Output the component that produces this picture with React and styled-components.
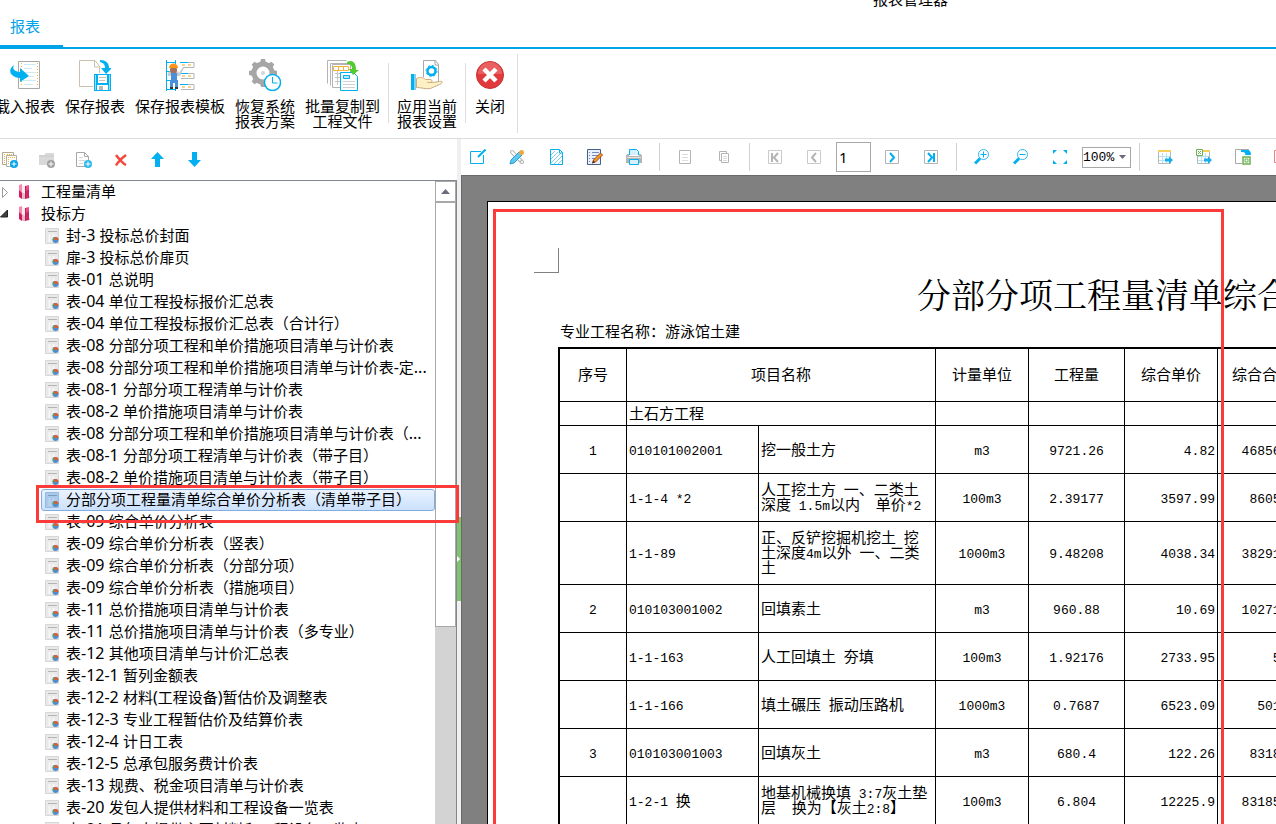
import React, { useState } from 'react';
import styled, { createGlobalStyle, css } from 'styled-components';

const colors = {
  blue: '#00b0f0',
  accent: '#00a2e8',
  line: '#dcdcdc',
  frame: '#828790',
  gray: '#a8a8a8',
  desk: '#808080',
  red: '#fb3a3a',
  green: '#7fc46c',
};

const sans = '"Noto Sans", "Noto Sans CJK SC", sans-serif';
const cjk = '"Noto Sans CJK SC", sans-serif';
const mono = '"Liberation Mono", "Noto Sans CJK SC", monospace';

const folders = [
  { name: '工程量清单', open: false, items: [] },
  {
    name: '投标方',
    open: true,
    items: [
      '封-3 投标总价封面',
      '扉-3 投标总价扉页',
      '表-01 总说明',
      '表-04 单位工程投标报价汇总表',
      '表-04 单位工程投标报价汇总表（合计行）',
      '表-08 分部分项工程和单价措施项目清单与计价表',
      '表-08 分部分项工程和单价措施项目清单与计价表-定...',
      '表-08-1 分部分项工程清单与计价表',
      '表-08-2 单价措施项目清单与计价表',
      '表-08 分部分项工程和单价措施项目清单与计价表（...',
      '表-08-1 分部分项工程清单与计价表（带子目）',
      '表-08-2 单价措施项目清单与计价表（带子目）',
      '分部分项工程量清单综合单价分析表（清单带子目）',
      '表-09 综合单价分析表',
      '表-09 综合单价分析表（竖表）',
      '表-09 综合单价分析表（分部分项）',
      '表-09 综合单价分析表（措施项目）',
      '表-11 总价措施项目清单与计价表',
      '表-11 总价措施项目清单与计价表（多专业）',
      '表-12 其他项目清单与计价汇总表',
      '表-12-1 暂列金额表',
      '表-12-2 材料(工程设备)暂估价及调整表',
      '表-12-3 专业工程暂估价及结算价表',
      '表-12-4 计日工表',
      '表-12-5 总承包服务费计价表',
      '表-13 规费、税金项目清单与计价表',
      '表-20 发包人提供材料和工程设备一览表',
      '表-21 承包人提供主要材料和工程设备一览表',
    ],
  },
];

const rows = [
  { no: '1', code: '010101002001', name: '挖一般土方', unit: 'm3', qty: '9721.26', price: '4.82', total: '46856.47' },
  { no: '', code: '1-1-4 *2', name: '人工挖土方 一、二类土\n深度 1.5m以内  单价*2', unit: '100m3', qty: '2.39177', price: '3597.99', total: '8605.57' },
  { no: '', code: '1-1-89', name: '正、反铲挖掘机挖土 挖\n土深度4m以外 一、二类\n土', unit: '1000m3', qty: '9.48208', price: '4038.34', total: '38291.86', height: 63 },
  { no: '2', code: '010103001002', name: '回填素土', unit: 'm3', qty: '960.88', price: '10.69', total: '10271.81' },
  { no: '', code: '1-1-163', name: '人工回填土 夯填', unit: '100m3', qty: '1.92176', price: '2733.95', total: '5254' },
  { no: '', code: '1-1-166', name: '填土碾压 振动压路机', unit: '1000m3', qty: '0.7687', price: '6523.09', total: '5014.3' },
  { no: '3', code: '010103001003', name: '回填灰土', unit: 'm3', qty: '680.4', price: '122.26', total: '83185.7' },
  { no: '', code: '1-2-1 换', name: '地基机械换填 3:7灰土垫\n层  换为【灰土2:8】', unit: '100m3', qty: '6.804', price: '12225.9', total: '83185.02' },
];

export default function App() {
  const [selected, setSelected] = useState('分部分项工程量清单综合单价分析表（清单带子目）');

  return (
    <Window>
      <GlobalStyle />
      <TitleBar>报表管理器</TitleBar>
      <Tabs>
        <Tab type="button">报表</Tab>
      </Tabs>
      <Ribbon />
      <Workspace>
        <Sidebar selected={selected} onSelect={setSelected} />
        <Splitter>
          <SplitterHandle type="button" aria-label="收起">
            <svg width="4" height="8" viewBox="0 0 4 8"><path d="M0 1l3 3-3 3z" fill="#fff" /></svg>
          </SplitterHandle>
        </Splitter>
        <Main>
          <ReportToolbar />
          <Preview />
        </Main>
      </Workspace>
    </Window>
  );
}

function Ribbon() {
  return (
    <RibbonBar>
      <RibbonButton type="button"><ImportIcon />载入报表</RibbonButton>
      <RibbonButton type="button"><SaveIcon />保存报表</RibbonButton>
      <RibbonButton type="button"><TemplateIcon />保存报表模板</RibbonButton>
      <RibbonButton type="button"><RestoreIcon />恢复系统<br />报表方案</RibbonButton>
      <RibbonButton type="button"><BatchIcon />批量复制到<br />工程文件</RibbonButton>
      <RibbonDivider />
      <RibbonButton type="button"><ApplyIcon />应用当前<br />报表设置</RibbonButton>
      <RibbonDivider />
      <RibbonButton type="button"><CloseIcon />关闭</RibbonButton>
      <RibbonDivider $tall />
    </RibbonBar>
  );
}

function Sidebar({ selected, onSelect }) {
  return (
    <Side>
      <SideTools>
        <IconButton type="button" aria-label="新建方案"><AddSchemeIcon /></IconButton>
        <IconButton type="button" aria-label="新建文件夹"><AddFolderIcon /></IconButton>
        <IconButton type="button" aria-label="新建报表"><AddPageIcon /></IconButton>
        <IconButton type="button" aria-label="删除"><DeleteIcon /></IconButton>
        <IconButton type="button" aria-label="上移"><ArrowIcon /></IconButton>
        <IconButton type="button" aria-label="下移"><ArrowIcon down /></IconButton>
      </SideTools>
      <TreePanel>
        <Tree>
          {folders.map((folder) => (
            <li key={folder.name}>
              <FolderRow type="button">
                <Toggle open={folder.open} />
                <FolderIcon />
                <RowText>{folder.name}</RowText>
              </FolderRow>
              {folder.open && (
                <Branch>
                  {folder.items.map((item) => (
                    <li key={item}>
                      <ReportRow
                        type="button"
                        $active={item === selected}
                        onClick={() => onSelect(item)}
                      >
                        <ReportIcon active={item === selected} />
                        <RowText><Mixed text={item} latin={TreeLatin} /></RowText>
                      </ReportRow>
                    </li>
                  ))}
                </Branch>
              )}
            </li>
          ))}
        </Tree>
        <ScrollBar>
          <ScrollButton type="button" aria-label="向上滚动">
            <svg width="9" height="5" viewBox="0 0 9 5"><path d="M4.5 0L9 5H0z" fill="#6b6b7d" /></svg>
          </ScrollButton>
          <ScrollThumb />
          <ScrollTrack />
        </ScrollBar>
      </TreePanel>
      <RowMarker />
    </Side>
  );
}

function ReportToolbar() {
  return (
    <Tools>
      <ToolGroup $first>
        <ToolButton type="button" aria-label="编辑"><EditIcon /></ToolButton>
        <ToolButton type="button" aria-label="设计"><DesignIcon /></ToolButton>
        <ToolButton type="button" aria-label="背景"><HatchIcon /></ToolButton>
        <ToolButton type="button" aria-label="批注"><NoteIcon /></ToolButton>
        <ToolButton type="button" aria-label="打印"><PrintIcon /></ToolButton>
      </ToolGroup>
      <ToolGroup>
        <ToolButton type="button" aria-label="单页"><SinglePageIcon /></ToolButton>
        <ToolButton type="button" aria-label="复制"><CopyIcon /></ToolButton>
      </ToolGroup>
      <ToolGroup>
        <ToolButton type="button" aria-label="首页"><NavIcon d="M5 4v9M11 4L7 8.500l4 4.500M5 8.500h2" /></ToolButton>
        <ToolButton type="button" aria-label="上一页"><NavIcon d="M10 4L6 8.500l4 4.500" /></ToolButton>
        <PageInput aria-label="页码" defaultValue="1" />
        <ToolButton type="button" aria-label="下一页"><NavIcon active d="M6 4l4 4.500L6 13" /></ToolButton>
        <ToolButton type="button" aria-label="末页"><NavIcon active d="M5 4l4 4.500L5 13M11 4v9M9 8.500h2" /></ToolButton>
      </ToolGroup>
      <ToolGroup>
        <ToolButton type="button" aria-label="放大"><ZoomIcon plus /></ToolButton>
        <ToolButton type="button" aria-label="缩小"><ZoomIcon /></ToolButton>
        <ToolButton type="button" aria-label="全屏"><FullIcon /></ToolButton>
        <ZoomBox>
          <ZoomSelect aria-label="缩放比例" defaultValue="100%">
            <option>100%</option>
            <option>75%</option>
            <option>50%</option>
          </ZoomSelect>
          <svg width="7" height="4" viewBox="0 0 7 4"><path d="M0 0h7L3.500 4z" fill="#6b6b7d" /></svg>
        </ZoomBox>
      </ToolGroup>
      <ToolGroup $last>
        <ToolButton type="button" aria-label="导出"><ExportIcon /></ToolButton>
        <ToolButton type="button" aria-label="导出到Excel"><ExportIcon excel /></ToolButton>
        <ToolButton type="button" aria-label="另存为Excel"><ExcelFileIcon /></ToolButton>
        <ToolButton type="button" aria-label="导出到PDF"><PdfIcon /></ToolButton>
      </ToolGroup>
    </Tools>
  );
}

function Preview() {
  return (
    <Desk>
      <Sheet>
        <CropMark />
        <SheetTitle>分部分项工程量清单综合单价分析表</SheetTitle>
        <ProjectName>专业工程名称：游泳馆土建</ProjectName>
        <Report>
          <colgroup>
            <col width="67" />
            <col width="132" />
            <col width="177" />
            <col width="93" />
            <col width="96" />
            <col width="93" />
            <col width="89" />
            <col />
          </colgroup>
          <thead>
            <Row $height={53}>
              <th>序号</th>
              <th colSpan={2}>项目名称</th>
              <th>计量单位</th>
              <th>工程量</th>
              <th>综合单价</th>
              <th>综合合价</th>
              <th />
            </Row>
          </thead>
          <tbody>
            <Row $height={24}>
              <Cell />
              <Cell colSpan={2}>土石方工程</Cell>
              <Cell />
              <Cell />
              <Cell />
              <Cell />
              <Cell />
            </Row>
            {rows.map((row) => (
              <Row key={row.code} $height={row.height || 48}>
                <Cell $align="center"><Mixed text={row.no} /></Cell>
                <Cell><Mixed text={row.code} /></Cell>
                <Cell><Mixed text={row.name} /></Cell>
                <Cell $align="center"><Mixed text={row.unit} /></Cell>
                <Cell $align="center"><Mixed text={row.qty} /></Cell>
                <Cell $align="right"><Mixed text={row.price} /></Cell>
                <Cell $align="right"><Mixed text={row.total} /></Cell>
                <Cell />
              </Row>
            ))}
          </tbody>
        </Report>
      </Sheet>
      <PageMarker />
    </Desk>
  );
}

// half-width characters get their own font and size
function Mixed({ text, latin: Part = Latin }) {
  return text.split(/([ -~]+)/).map((part, i) => (i % 2 ? <Part key={i}>{part}</Part> : part));
}

/* ---------- icons ---------- */

function Toggle({ open }) {
  return (
    <svg width="9" height="12" viewBox="0 0 9 12">
      {open
        ? <path d="M7.500 2v7H.500z" fill="#404040" stroke="#222" />
        : <path d="M2.500 1.500l5 5-5 5z" fill="#fff" stroke="#9a9a9a" />}
    </svg>
  );
}

function FolderIcon() {
  return (
    <svg width="15" height="16" viewBox="0 0 15 16">
      <path d="M2 1l3-1v14l-3-2z" fill="#f58aae" />
      <path d="M2 6l3 3v6l-3-2z" fill="#d01a5c" />
      <path d="M5 1l3 1v13l-3-1z" fill="#f4eef0" />
      <path d="M5 8l3 2v5H5z" fill="#e6b8c8" />
      <path d="M8 2l4-1v13l-4 1z" fill="#ec4a88" />
      <path d="M8 8l4-3v9l-4 1z" fill="#d42266" />
      <path d="M8 2h1v13H8z" fill="#b8235a" />
      <path d="M12 12l2 1-3 2H8l4-1z" fill="#cfcfcf" />
    </svg>
  );
}

function ReportIcon({ active }) {
  return (
    <svg width="14" height="16" viewBox="0 0 14 16">
      <path d="M.500.500h13v15H.500z" fill={active ? '#a9c9ea' : '#e9e9e9'} stroke={active ? '#98bbe0' : '#d6d6d6'} />
      <path d="M3 3.500h9" stroke={active ? '#7f9cba' : '#b4b4b4'} />
      <path d="M4.500 6v8M8.500 6v3" stroke={active ? '#bcd6f0' : '#f6f6f6'} strokeWidth="2" />
      <circle cx="10.500" cy="12" r="3" fill="#4d8fcc" />
      <path d="M7.500 12a3 3 0 0 1 3-3v3z" fill="#5fa05a" />
      <path d="M8.500 9.800a3 3 0 0 1 5 2.200h-3z" fill="#dd5a3c" />
    </svg>
  );
}

function ImportIcon() {
  return (
    <svg width="32" height="32" viewBox="0 0 32 32">
      <path d="M9.500 2.500h21v27h-21z" fill="#fff" stroke="#a8a8a8" />
      <path d="M12.500 4v24M28.500 4v24" stroke="#f2b233" strokeDasharray="1 2" />
      <path d="M15 5.500h12M15 9.500h8M15 13.500h12M20 17.500h5M14 21.500h13M15 25.500h9" stroke="#cdeaf7" />
      <path d="M5 6c-2 4 0 6 6 7V9l9 8-9 6v-4C1 18-2 11 5 6z" fill={colors.blue} />
    </svg>
  );
}

function SaveIcon() {
  return (
    <svg width="32" height="32" viewBox="0 0 32 32">
      <path d="M21 8.500V8l-5-6.500H.500v26H14M15.500 2v6h5v6" fill="none" stroke="#cbbfae" />
      <path d="M21 1c6 0 9 3 9 8h3l-6 6-5-6h4c0-3-1-5-5-6z" fill={colors.blue} />
      <path d="M15 15h17v17H15z" fill={colors.blue} />
      <path d="M16 16h1v15h-1zM30 16h1v15h-1z" fill="#9ddcf5" />
      <path d="M19 16h9v8h-9z" fill="#fff" />
      <path d="M20 18.500h7M20 21.500h6" stroke="#cbbfae" />
      <path d="M18 26h11v5H18z" fill="#fff" />
      <path d="M20 27h4v4h-4z" fill="#b8b8b8" />
    </svg>
  );
}

function TemplateIcon() {
  return (
    <svg width="32" height="32" viewBox="0 0 32 32">
      <path d="M2.500 1v31M11.500 1v31M2 3.500h9M2 12.500h9M2 21.500h9M2 30.500h9" fill="none" stroke={colors.blue} />
      <path d="M16 3.500h14v5H19M17 14.500h13v5H17M16 25.500h14v5H17" fill="none" stroke="#b4b4b4" />
      <path d="M16 3.500h8M16 14.500h8M16 25.500h8" stroke={colors.blue} />
      <path d="M18 6h3M24 6h3M18 17h3M24 17h3M18 28h3M24 28h3" stroke="#f5a623" />
      <path d="M4 14c1-3 10-3 11 0l4-6 1 1-4 8H4z" fill="#c9ccd2" />
      <circle cx="9.500" cy="11" r="3.500" fill="#a5705c" />
      <path d="M5 9c0-6 9-6 9 0z" fill="#ff9418" />
      <path d="M7 14h6v7h1v7h-3v-4H9v4H6v-7h1z" fill="#4b8fd8" />
      <path d="M6 28h3v2H6zM11 28h3v2h-3z" fill="#333" />
    </svg>
  );
}

function RestoreIcon() {
  const teeth = [0, 45, 90, 135, 180, 225, 270, 315];
  return (
    <svg width="32" height="32" viewBox="0 0 32 32">
      {teeth.map((a) => (
        <path key={a} d="M11 4l1-4h4l1 4z" fill="#a6a6a6" transform={`rotate(${a} 14 14)`} />
      ))}
      <circle cx="14" cy="14" r="9" fill="none" stroke="#a6a6a6" strokeWidth="5" />
      <circle cx="14" cy="14" r="2" fill="#d4d4d4" />
      <circle cx="23.500" cy="23.500" r="8" fill="#fff" stroke={colors.blue} strokeWidth="1.500" />
      <path d="M23.500 18v6h5" fill="none" stroke={colors.blue} />
    </svg>
  );
}

function BatchIcon() {
  return (
    <svg width="32" height="32" viewBox="0 0 32 32">
      <path d="M.500 24.500V1.500h19M3.500 26.500V4.500h19" fill="none" stroke="#b4b4b4" />
      <path d="M5.500 5.500h18v23h-18z" fill="#fff" stroke="#b4b4b4" />
      <path d="M8 14.500h12M8 18.500h6M8 22.500h6M10.500 12v14" stroke="#c4c4c4" />
      <path d="M6.500 7.500h15v4h-15zM11.500 7v5M16.500 7v5" fill="none" stroke="#f5b23c" />
      <path d="M13.500 13.500h13l4 4v14h-17z" fill="#fff" stroke={colors.blue} />
      <path d="M20 3c6-3 9 1 9 8h3l-6 5-4-6h3c0-3-1-5-5-5z" fill="#52cc2e" />
      <path d="M16.500 16.500h6v3h-6z" fill="#b5e5f8" stroke={colors.blue} />
      <path d="M16 22.500h12M16 25.500h12M16 28.500h12" stroke="#d0d0d0" />
    </svg>
  );
}

function ApplyIcon() {
  return (
    <svg width="32" height="32" viewBox="0 0 32 32">
      <path d="M12.500 18V1.500h12l3 4v17" fill="#fff" stroke="#a8a8a8" />
      <path d="M24 1v5h4" fill="none" stroke="#a8a8a8" />
      <circle cx="20.500" cy="12" r="4" fill="none" stroke={colors.blue} strokeWidth="2.500" />
      <circle cx="20.500" cy="12" r="5.500" fill="none" stroke={colors.blue} strokeDasharray="2 2.300" />
      <path d="M0 15h3v16H0z" fill={colors.blue} />
      <path d="M3 15h2v16H3z" fill="#7fd3f3" />
      <path d="M5.500 28.500v-9c4-2 7-1 9 1h5c2 0 2 3 0 3h-3 5l7-1c4-1 3 2 0 3l-9 4c-4 1-9-1-14-1z" fill="#fdf0c4" stroke="#c8ac84" />
    </svg>
  );
}

function CloseIcon() {
  return (
    <svg width="32" height="32" viewBox="0 0 32 32">
      <circle cx="16" cy="16" r="13.500" fill="#e23a3c" stroke="#c43436" />
      <path d="M4 15a12 12 0 0 1 24 0z" fill="#ea6060" />
      <path d="M10 10l12 12M22 10L10 22" stroke="#fff" strokeWidth="4.500" />
    </svg>
  );
}

function PlusBadge({ color }) {
  return (
    <>
      <circle cx="12" cy="12" r="4" fill={color} />
      <path d="M9.500 12h5M12 9.500v5" stroke="#fff" />
    </>
  );
}

function AddSchemeIcon() {
  return (
    <svg width="16" height="16" viewBox="0 0 16 16">
      <path d="M.500.500h11v12H.500z" fill="#fff" stroke="#b0a890" />
      <path d="M2.500 2v9M5 2.500h6" stroke="#f5b23c" strokeDasharray="1 1" />
      <path d="M4.500 3.500h10v11h-10z" fill="#fff" stroke="#b0b0a0" />
      <path d="M6.500 5v8M8 5.500h5M8 10.500h3" stroke="#f5b23c" strokeDasharray="1 1" />
      <PlusBadge color={colors.accent} />
    </svg>
  );
}

function AddFolderIcon() {
  return (
    <svg width="16" height="16" viewBox="0 0 16 16">
      <path d="M0 3h5l2-2h8v12H0z" fill="#d9d9d9" />
      <path d="M0 4h15" stroke="#cacaca" />
      <PlusBadge color="#a0a0a0" />
    </svg>
  );
}

function AddPageIcon() {
  return (
    <svg width="16" height="16" viewBox="0 0 16 16">
      <path d="M.500.500h8l4 4v10H.500zM8.500.500v4h4" fill="#fff" stroke="#a8a8a8" />
      <path d="M3 5.500h4M3 8.500h6M3 11.500h4" stroke="#d8d8d8" />
      <PlusBadge color="#2cb8ea" />
    </svg>
  );
}

function DeleteIcon() {
  return (
    <svg width="16" height="16" viewBox="0 0 16 16">
      <path d="M3 3c3 4 6 8 10 10M13 3C9 6 5 10 3 13.500" fill="none" stroke="#f4483a" strokeWidth="2.500" />
    </svg>
  );
}

function ArrowIcon({ down }) {
  return (
    <svg width="16" height="16" viewBox="0 0 16 16">
      <path d={down ? 'M5 0h5v8h4l-6.500 7L1 8h4z' : 'M7.500 0L14 7h-4v8H5V7H1z'} fill={colors.blue} />
    </svg>
  );
}

function EditIcon() {
  return (
    <svg width="16" height="16" viewBox="0 0 16 16">
      <path d="M11 2.500H.500v12h13V6" fill="none" stroke={colors.blue} />
      <path d="M15.500.500L8 8" stroke={colors.blue} strokeWidth="2" />
    </svg>
  );
}

function DesignIcon() {
  return (
    <svg width="16" height="16" viewBox="0 0 16 16">
      <path d="M3 3l10 10" stroke="#b4b4b4" strokeWidth="4" strokeLinecap="round" />
      <path d="M3 3l10 10" stroke="#fff" strokeWidth="2" strokeLinecap="round" strokeDasharray="4 3" />
      <path d="M10 3l3 3-8 8-4 1 1-4z" fill="#5cc9f2" stroke="#2b9bd0" />
      <circle cx="12.500" cy="3.500" r="2.500" fill="#f0a83c" />
    </svg>
  );
}

function HatchIcon() {
  return (
    <svg width="16" height="16" viewBox="0 0 16 16">
      <path d="M2.500.500h9l3 3v12h-12z" fill="#fff" stroke={colors.blue} />
      <path d="M3 6l4-4M3 10l7-7M3 14l10-10M6 15l8-8M10 15l4-4" stroke="#7fd3e8" />
      <path d="M11.500 1v3h3" fill="none" stroke={colors.blue} />
    </svg>
  );
}

function NoteIcon() {
  return (
    <svg width="16" height="16" viewBox="0 0 16 16">
      <path d="M.500.500h13v15H.500z" fill="#e9f0fa" stroke="#44618f" />
      <path d="M2 3.500h1M2 6.500h1M2 9.500h1M2 12.500h1M5 3.500h7M5 6.500h6M5 9.500h3" stroke="#6d8cba" />
      <path d="M13.500 4l2 2-7 7-3 1 1-3z" fill="#f79c1e" stroke="#a8431a" />
      <path d="M5 14.500l1.500-3 1.500 1.500z" fill="#333" />
    </svg>
  );
}

function PrintIcon() {
  return (
    <svg width="16" height="16" viewBox="0 0 16 16">
      <path d="M3.500 6V.500h7l2 2V6" fill="#d5f1fb" stroke={colors.blue} />
      <path d="M1 5h2v2h10V5h2l1 2v7H0V7z" fill="#b4b4b4" />
      <path d="M1 8.500h14" stroke="#e4e4e4" />
      <path d="M3.500 10.500h9v5h-9z" fill="#d5f1fb" stroke={colors.blue} />
    </svg>
  );
}

function SinglePageIcon() {
  return (
    <svg width="16" height="16" viewBox="0 0 16 16">
      <path d="M2.500 1.500h11v13h-11z" fill="#fff" stroke="#b4b4b4" />
      <path d="M5 5.500h6M5 8.500h6M5 11.500h6" stroke="#dcdcdc" />
    </svg>
  );
}

function CopyIcon() {
  return (
    <svg width="16" height="16" viewBox="0 0 16 16">
      <path d="M3.500 2.500h7v9h-7z" fill="#fff" stroke="#b4b4b4" />
      <path d="M5.500 4.500h7v9h-7z" fill="#fff" stroke="#b4b4b4" />
      <path d="M7 7.500h4M7 9.500h4M7 11.500h4" stroke="#dcdcdc" />
    </svg>
  );
}

function NavIcon({ d, active }) {
  return (
    <svg width="16" height="16" viewBox="0 0 16 16">
      <path d="M1.500 1.500h13v13h-13z" fill="#fff" stroke={active ? '#b4b4b4' : '#cacaca'} />
      <path d={d} fill="none" stroke={active ? colors.blue : '#b4b4b4'} strokeWidth="2" />
    </svg>
  );
}

function ZoomIcon({ plus }) {
  return (
    <svg width="16" height="16" viewBox="0 0 16 16">
      <circle cx="9.500" cy="5.500" r="5" fill="#fff" stroke="#30b8ec" />
      <path d={plus ? 'M6.500 5.500h6M9.500 2.500v6' : 'M6.500 5.500h6'} stroke={colors.blue} />
      <path d="M6 9.500l-5 5" stroke={colors.blue} strokeWidth="3" />
    </svg>
  );
}

function FullIcon() {
  return (
    <svg width="16" height="16" viewBox="0 0 16 16">
      <path d="M1 1h4L1 5zM11 1h4v4zM1 11v4h4zM15 11v4h-4z" fill={colors.blue} />
    </svg>
  );
}

function ExportIcon({ excel }) {
  return (
    <svg width="16" height="16" viewBox="0 0 16 16">
      <path d="M1.500 1.500h12v13h-12z" fill="#fff" stroke="#b0b8bc" />
      <path d="M1 2h13" stroke="#f9cf5c" strokeWidth="2" />
      <path d="M5.500 4v10M9.500 4v10M2 7.500h11M2 11.500h11" stroke="#b4e4f4" />
      {excel && <path d="M.500.500h6v6h-6z" fill="#fff" stroke="#6bb050" />}
      {excel && <path d="M2 2l3 3M5 2L2 5" stroke="#6bb050" />}
      <path d="M8 9.500h4V7.500l4 3.500-4 4v-2.500H8z" fill="#19aef0" />
    </svg>
  );
}

function ExcelFileIcon() {
  return (
    <svg width="16" height="16" viewBox="0 0 16 16">
      <path d="M7 14.500H.500V.500h13V6" fill="none" stroke="#a8a8a8" />
      <path d="M6 1h6c3 0 4 2 4 5h-6c1-2 0-3-4-3z" fill={colors.blue} />
      <path d="M8 8h7v7H8z" fill="#fff" stroke="#6bb050" strokeWidth="1.500" />
      <path d="M10 10h3v3h-3z" fill="none" stroke="#6bb050" />
    </svg>
  );
}

function PdfIcon() {
  return (
    <svg width="16" height="16" viewBox="0 0 16 16">
      <path d="M.500 1.500h14v12H.500z" fill="#fff" stroke="#f08080" />
      <path d="M2 10c4-2 6-5 6-8 0 4 2 7 6 7" fill="none" stroke="#f08080" />
    </svg>
  );
}

/* ---------- styles ---------- */

const GlobalStyle = createGlobalStyle`
  * {
    box-sizing: border-box;
  }

  body {
    margin: 0;
    background: #fff;
    color: #000;
    font-family: ${sans};
    font-size: 15px;
  }

  button, input, select {
    margin: 0;
    padding: 0;
    font: inherit;
    color: inherit;
  }

  button {
    border: 0;
    background: none;
  }

  svg {
    display: block;
    flex: none;
  }

  ul {
    margin: 0;
    padding: 0;
    list-style: none;
  }
`;

const Window = styled.div`
  display: flex;
  flex-direction: column;
  height: 100vh;
  overflow: hidden;
`;

const TitleBar = styled.div`
  display: flex;
  align-items: flex-end;
  height: 9px;
  padding-left: 873px;
  overflow: hidden;
  font-family: ${cjk};
  line-height: 20px;
  flex: none;
`;

const Tabs = styled.nav`
  display: flex;
  height: 40px;
  border-bottom: 2px solid ${colors.accent};
  flex: none;
`;

const Tab = styled.button`
  width: 63px;
  height: 38px;
  padding: 0 16px 4px 3px;
  border-bottom: 2px solid ${colors.accent};
  color: ${colors.accent};
  font-family: ${cjk};
`;

const RibbonBar = styled.div`
  display: flex;
  gap: 8px;
  height: 90px;
  margin-left: -6px;
  border-bottom: 1px solid ${colors.line};
  flex: none;
`;

const RibbonButton = styled.button`
  display: block;
  align-self: flex-start;
  padding: 10px 1px 0;
  font-family: ${cjk};
  line-height: 15px;
  white-space: nowrap;

  svg {
    margin: 0 auto 7px;
  }
`;

const RibbonDivider = styled.div`
  width: 1px;
  height: ${({ $tall }) => ($tall ? '79px' : '60px')};
  margin: ${({ $tall }) => ($tall ? '5px 0 0 2px' : '14px -1px 0')};
  background: ${colors.line};
`;

const Workspace = styled.div`
  display: flex;
  flex: 1;
  min-height: 0;
`;

const Side = styled.aside`
  display: flex;
  flex-direction: column;
  width: 457px;
  position: relative;
  flex: none;
`;

const SideTools = styled.div`
  display: flex;
  align-items: center;
  gap: 21px;
  height: 41px;
  padding-left: 2px;
  flex: none;
`;

const IconButton = styled.button`
  width: 16px;
  height: 16px;
`;

const TreePanel = styled.div`
  display: flex;
  flex: 1;
  min-height: 0;
  border-top: 1px solid ${colors.frame};
  border-right: 1px solid ${colors.frame};
`;

const Tree = styled.ul`
  flex: 1;
  overflow: hidden;
`;

const Branch = styled.ul`
  padding-left: 41px;
`;

const rowStyle = css`
  display: flex;
  align-items: center;
  width: 100%;
  height: 22px;
  text-align: left;
`;

const FolderRow = styled.button`
  ${rowStyle}

  svg + svg {
    margin: 0 9px 0 8px;
  }
`;

const ReportRow = styled.button`
  ${rowStyle}
  gap: 7px;
  padding-left: 3px;
  border: 1px solid transparent;
  border-radius: 3px;
  ${({ $active }) => $active && css`
    border-color: #84acdd;
    background: linear-gradient(#eaf3ff, #cbe1fd);
  `}
`;

const RowText = styled.span`
  padding-bottom: 2px;
  font-family: ${cjk};
  line-height: 20px;
  white-space: nowrap;
`;

const ScrollBar = styled.div`
  display: flex;
  flex-direction: column;
  width: 21px;
`;

const ScrollButton = styled.button`
  display: flex;
  align-items: center;
  justify-content: center;
  height: 21px;
  border: 1px solid ${colors.gray};
  background: #fff;
`;

const ScrollThumb = styled.div`
  flex: 424;
  border: 1px solid ${colors.gray};
  background: #fff;
`;

const ScrollTrack = styled.div`
  flex: 198;
  background: #d3d3d3;
`;

const RowMarker = styled.div`
  position: absolute;
  top: 346px;
  left: 36px;
  width: 423px;
  height: 38px;
  border: 3px solid ${colors.red};
  z-index: 2;
  pointer-events: none;
`;

const Splitter = styled.div`
  display: flex;
  align-items: center;
  width: 4px;
  padding-top: 154px;
  background: #f0f0f0;
  flex: none;
`;

const SplitterHandle = styled.button`
  display: flex;
  align-items: center;
  width: 4px;
  height: 84px;
  background: ${colors.green};
`;

const Main = styled.main`
  display: flex;
  flex-direction: column;
  flex: 1;
  min-width: 0;
`;

const Tools = styled.div`
  display: flex;
  align-items: center;
  height: 36px;
  overflow: hidden;
  flex: none;
`;

const ToolGroup = styled.div`
  display: flex;
  align-items: center;
  gap: 5px;
  height: 28px;
  padding: ${({ $first }) => ($first ? '0 8px 0 0' : '0 8px')};
  border-right: ${({ $last }) => ($last ? '0' : '1px solid #d0d0d0')};
  flex: none;
`;

const ToolButton = styled.button`
  display: flex;
  justify-content: center;
  width: 34px;
  height: 16px;
`;

const PageInput = styled.input`
  width: 35px;
  height: 30px;
  margin-right: -1px;
  padding: 0 2px;
  border: 1px solid ${colors.gray};
  font-family: ${sans};
`;

const ZoomBox = styled.div`
  display: flex;
  align-items: center;
  width: 49px;
  height: 21px;
  padding-right: 4px;
  border: 1px solid ${colors.gray};
`;

const ZoomSelect = styled.select`
  flex: 1;
  min-width: 0;
  height: 19px;
  border: 0;
  background: transparent;
  appearance: none;
  font-family: ${mono};
  font-size: 13px;
`;

const Desk = styled.div`
  position: relative;
  flex: 1;
  padding: 25px 0 0 25px;
  border-top: 1px solid #696969;
  border-left: 1px solid #696969;
  background: ${colors.desk};
  overflow: hidden;
`;

// the paper is wider than the view and is cut off at its right edge
const Sheet = styled.article`
  width: 1404px;
  height: 992px;
  padding: 46px 70px 0;
  border: 1px solid #000;
  background: #fff;
  font-family: ${cjk};
`;

const CropMark = styled.div`
  width: 25px;
  height: 25px;
  margin-left: -24px;
  border-right: 1px solid ${colors.desk};
  border-bottom: 1px solid ${colors.desk};
`;

const SheetTitle = styled.h1`
  margin: 0;
  font-family: "Noto Serif CJK SC", "Noto Sans CJK SC", serif;
  font-size: 34px;
  font-weight: 400;
  line-height: 42px;
  text-align: center;
`;

const ProjectName = styled.p`
  margin: 0;
  padding-left: 2px;
  line-height: 32px;
`;

const Report = styled.table`
  width: 1262px;
  border-top: 2px solid #000;
  border-left: 2px solid #000;
  border-spacing: 0;
  table-layout: fixed;
  line-height: 15px;

  th, td {
    padding: 0 2px 3px;
    border-right: 1px solid #000;
    border-bottom: 1px solid #000;
  }

  th {
    font-weight: 400;
  }
`;

const Row = styled.tr`
  height: ${({ $height }) => $height}px;
`;

const Cell = styled.td`
  text-align: ${({ $align }) => $align || 'left'};
  white-space: pre;
`;

const Latin = styled.span`
  font-family: ${mono};
  font-size: 13px;
  line-height: 0;
`;

const TreeLatin = styled.span`
  font-family: ${sans};
  font-size: 16px;
  line-height: 0;
`;

const PageMarker = styled.div`
  position: absolute;
  top: 33px;
  left: 31px;
  bottom: -3px;
  width: 731px;
  border: 3px solid ${colors.red};
  pointer-events: none;
`;
